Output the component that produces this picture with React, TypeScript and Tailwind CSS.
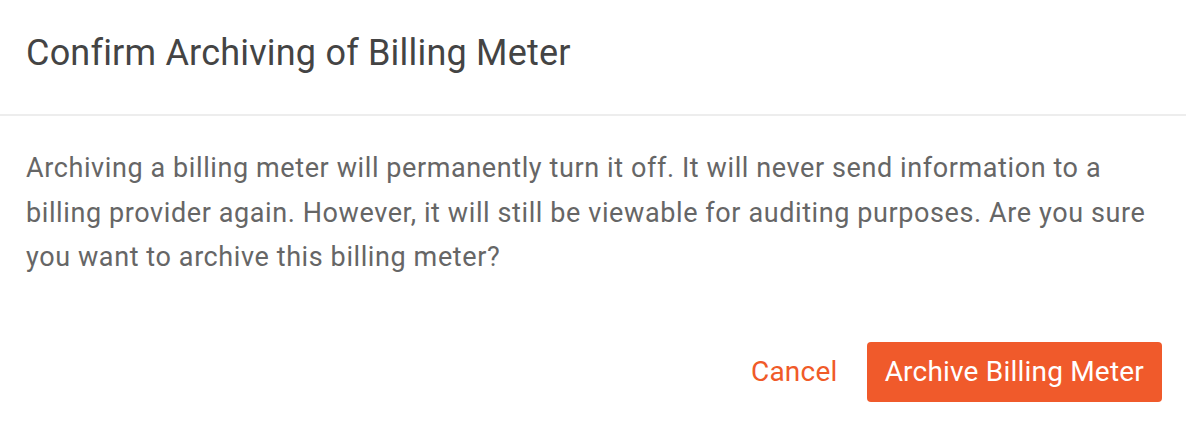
export default function App() {
  return (
    <div className="w-[1186px] h-[430px] bg-white font-['Roboto',sans-serif]">
      <div className="h-[116px] px-[26px] pt-[35px] border-b-2 border-[#ededed]">
        <h1 className="text-[36px] text-[#444444] font-normal leading-none tracking-[0.2px]">Confirm Archiving of Billing Meter</h1>
      </div>
      <p className="px-[26px] pt-[30px] text-[27px] leading-[44.55px] tracking-[0.6px] text-[#666666]">
        Archiving a billing meter will permanently turn it off. It will never send information to a billing provider again. However, it will still be viewable for auditing purposes. Are you sure you want to archive this billing meter?
      </p>
      <div className="flex justify-end items-center gap-[29px] px-[24px] mt-[62px]">
        <button className="text-[28px] tracking-[0.25px] text-[#f05a28]">Cancel</button>
        <button className="h-[60px] px-[18px] rounded-[4px] bg-[#f05a2b] text-white text-[28px] tracking-[0.2px]">Archive Billing Meter</button>
      </div>
    </div>
  );
}
